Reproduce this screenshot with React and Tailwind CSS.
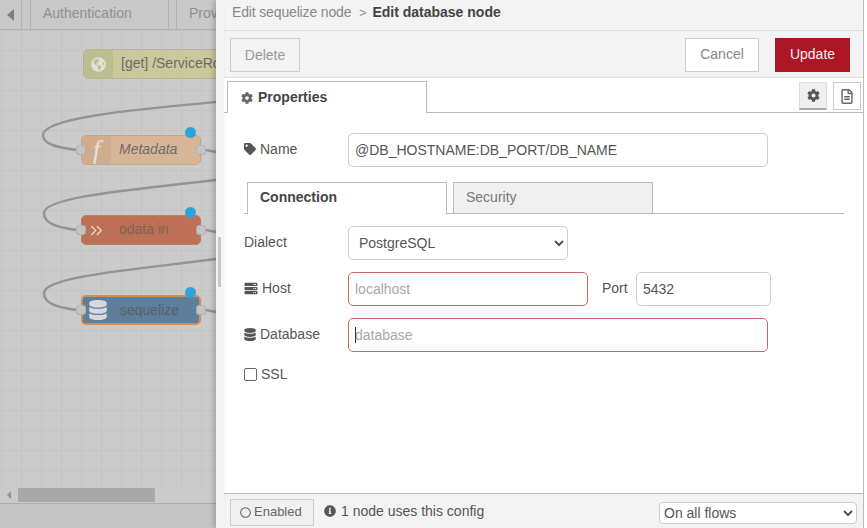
import { ChevronsRight } from 'lucide-react'
import {
  FaCog,
  FaDatabase,
  FaGlobeAmericas,
  FaInfoCircle,
  FaRegCircle,
  FaRegFileAlt,
  FaServer,
  FaTag,
} from 'react-icons/fa'

const font = "[font-family:'Liberation_Sans',Arial,sans-serif]"

const FlowNode = ({ top, left = 'left-[81px]', width = 'w-[120px]', label, icon, bg, iconBg, border, italic, ports = true, textColor = 'text-[#6b6b6b]' }) => (
  <div className={`absolute ${left} ${width} h-[30px]`} style={{ top }}>
    <div className={`flex h-full w-full rounded-[5px] overflow-hidden ${bg} ${border}`}>
      <div className={`flex items-center justify-center w-[29px] shrink-0 ${iconBg}`}>{icon}</div>
      <div className={`pl-[8px] leading-[27px] text-[14px] whitespace-nowrap ${textColor} ${italic ? 'italic' : ''}`}>{label}</div>
    </div>
    {ports && (
      <>
        <div className="absolute left-[-5px] top-[10px] w-[10px] h-[10px] rounded-[3px] bg-[#c4c4c4] border border-[#b0b0b0]" />
        <div className="absolute right-[-5px] top-[10px] w-[10px] h-[10px] rounded-[3px] bg-[#c4c4c4] border border-[#b0b0b0]" />
        <div className="absolute right-[5px] top-[-8px] w-[11px] h-[11px] rounded-full bg-[#2fa4d8]" />
      </>
    )}
  </div>
)

const Workspace = () => (
  <div className="flex flex-col w-[216px] h-full shrink-0 bg-[#c6c6c6]">
    {/* tab strip */}
    <div className="flex h-[30px] shrink-0 border-b border-[#b2b2b2] bg-[#c9c9c9] overflow-hidden">
      <div className="flex items-center justify-center w-[22px] shrink-0 border-r border-[#b2b2b2]">
        <div className="w-0 h-0 border-y-[6px] border-y-transparent border-r-[7px] border-r-[#808080]" />
      </div>
      <div className="w-[139px] ml-[8px] shrink-0 pl-[12px] leading-[27px] text-[14px] text-[#8f8f8f] border-x border-[#b2b2b2]">Authentication</div>
      <div className="ml-[7px] pl-[12px] flex-1 leading-[27px] text-[14px] text-[#8f8f8f] border-l border-[#b2b2b2]">Prov</div>
    </div>

    {/* canvas */}
    <div className="relative flex-1 overflow-hidden bg-[#cbcbcb] bg-[linear-gradient(to_right,#c4c4c4_1px,transparent_1px),linear-gradient(to_bottom,#c4c4c4_1px,transparent_1px)] bg-[size:20px_20px] bg-[position:1px_0px]">
      <svg className="absolute left-0 top-0" width="216" height="458" viewBox="0 30 216 458" fill="none" stroke="#939393" strokeWidth="2.5">
        <path d="M77 150C55 147 43 144 43 135C43 118 130 110 216 102" />
        <path d="M77 230C55 227 44 223 44 213C44 197 130 190 216 180" />
        <path d="M77 310C55 307 44 303 44 293C44 277 130 270 216 259" />
        <path d="M206 150L216 152M206 230L216 232M206 310L216 312" />
      </svg>
      <FlowNode
        top={19}
        left="left-[83px]"
        width="w-[200px]"
        label="[get] /ServiceRoot"
        bg="bg-[#c9c99c]"
        iconBg="bg-[#bdbd92]"
        border="border border-[#b3b397]"
        ports={false}
        icon={<FaGlobeAmericas className="w-[15px] h-[15px] text-[#e2e2d2]" />}
      />
      <FlowNode
        top={105}
        label="Metadata"
        italic
        bg="bg-[#d9b598]"
        iconBg="bg-[#cfab8f]"
        border="border border-[#bda892]"
        icon={<span className="[font-family:'Liberation_Serif',serif] italic text-[27px] leading-[28px] text-[#ebe0d6]">f</span>}
      />
      <FlowNode
        top={185}
        label="odata in"
        bg="bg-[#bd7055]"
        iconBg="bg-[#bd7055]"
        border="border border-[#b5806a]"
        textColor="text-[#7d6257]"
        icon={<ChevronsRight className="w-[19px] h-[19px] text-[#e6d4ca]" strokeWidth={1.75} />}
      />
      <FlowNode
        top={265}
        label="sequelize"
        bg="bg-[#5f7e9b]"
        iconBg="bg-[#5f7e9b]"
        border="border-2 border-[#cf9058]"
        textColor="text-[#54606c]"
        icon={<FaDatabase className="w-[18px] h-[20px] text-[#d9d9d9]" />}
      />
    </div>

    {/* scrollbar */}
    <div className="flex items-center h-[17px] shrink-0 border-b border-[#adadad] bg-[#cbcbcb]">
      <div className="ml-[7px] w-0 h-0 border-y-[4px] border-y-transparent border-r-[4px] border-r-[#8f8f8f]" />
      <div className="ml-[7px] w-[137px] h-[14px] bg-[#a9a9a9]" />
    </div>
    <div className="h-[24px] shrink-0" />
  </div>
)

const Separator = () => (
  <div className="relative z-10 w-[8px] h-full shrink-0 bg-[#f5f5f5] shadow-[-3px_0_5px_rgba(0,0,0,0.18)]">
    <div className="absolute left-[2px] top-[237px] w-[3px] h-[50px] bg-[#c8c8c8]" />
  </div>
)

const Label = ({ icon, children }) => (
  <label className="flex items-center gap-[4px] w-[104px] shrink-0 pb-[2px] text-[14px] text-[#555]">
    {icon}
    {children}
  </label>
)

const Input = ({ value, placeholder, invalid, className = '' }) => (
  <input
    readOnly
    value={value}
    placeholder={placeholder}
    className={`h-[34px] px-[6px] rounded-[5px] border bg-white text-[14px] text-[#555] placeholder:text-[#a8a8a8] outline-none ${invalid ? 'border-[#c66]' : 'border-[#ccc]'} ${className}`}
  />
)

const Editor = () => (
  <div className="flex flex-col w-[640px] h-full shrink-0 bg-white border-r border-[#bbb]">
    <div className="flex items-center h-[31px] shrink-0 pl-[8px] pb-[5px] gap-[6px] bg-[#f3f3f3] border-b border-[#ddd] text-[14px] text-[#888]">
      <span className="tracking-[-0.15px]">Edit sequelize node</span>
      <span className="ml-[2px] text-[12px]">&gt;</span>
      <span className="font-bold text-[#444]">Edit database node</span>
    </div>

    <div className="flex items-center justify-between h-[47px] shrink-0 px-[6px] pt-[1px] bg-[#f3f3f3] border-b border-[#ddd] text-[14px]">
      <button className="w-[70px] h-[34px] mt-[1px] bg-[#f3f3f3] border border-[#ccc] text-[#999]">Delete</button>
      <div className="flex gap-[16px] pr-[7px]">
        <button className="w-[74px] h-[34px] bg-white border border-[#ccc] text-[#888]">Cancel</button>
        <button className="w-[75px] h-[34px] bg-[#ad1625] text-[#eee]">Update</button>
      </div>
    </div>

    <div className="flex justify-between h-[35px] shrink-0 pl-[3px] border-b border-[#bbb]">
      <div className="flex items-center gap-[5px] w-[200px] h-[32px] mt-[3px] pl-[13px] bg-white border border-b-0 border-[#bbb] text-[14px] font-bold text-[#444]">
        <FaCog className="w-[12px] h-[12px] text-[#666]" />
        Properties
      </div>
      <div className="flex gap-[6px] pt-[4px] pr-[2px]">
        <div className="flex items-center justify-center w-[28px] h-[28px] bg-[#efefef] border border-[#ddd] border-b-2 border-b-[#aaa]">
          <FaCog className="w-[13px] h-[13px] text-[#555]" />
        </div>
        <div className="flex items-center justify-center w-[28px] h-[28px] bg-white border border-[#ccc]">
          <FaRegFileAlt className="w-[12px] h-[15px] text-[#666]" />
        </div>
      </div>
    </div>

    <div className="flex-1 pl-[20px] pt-[20px]">
      <div className="flex items-center">
        <Label icon={<FaTag className="w-[12px] h-[12px] text-[#555]" />}>Name</Label>
        <Input value="@DB_HOSTNAME:DB_PORT/DB_NAME" className="w-[420px]" />
      </div>

      <div className="flex w-[600px] h-[32px] mt-[15px] pl-[3px] gap-[6px] border-b border-[#bbb]">
        <div className="w-[200px] h-[32px] pl-[12px] leading-[29px] bg-white border border-b-0 border-[#bbb] text-[14px] font-bold text-[#444]">Connection</div>
        <div className="w-[200px] h-[31px] pl-[12px] leading-[29px] bg-[#f0f0f0] border border-b-0 border-[#bbb] text-[14px] text-[#777]">Security</div>
      </div>

      <div className="flex items-center mt-[12px]">
        <Label>Dialect</Label>
        <select className="w-[220px] h-[34px] px-[6px] rounded-[5px] border border-[#ccc] bg-white text-[14px] text-[#555]">
          <option>PostgreSQL</option>
        </select>
      </div>

      <div className="flex items-center mt-[12px]">
        <Label icon={<FaServer className="w-[14px] h-[13px] text-[#555]" />}>Host</Label>
        <Input value="" placeholder="localhost" invalid className="w-[240px]" />
        <span className="ml-[14px] w-[34px] pb-[2px] text-[14px] text-[#555]">Port</span>
        <Input value="5432" className="w-[135px]" />
      </div>

      <div className="flex items-center mt-[12px]">
        <Label icon={<FaDatabase className="w-[12px] h-[13px] text-[#555]" />}>Database</Label>
        <div className="relative">
          <Input value="" placeholder="database" invalid className="w-[420px]" />
          <div className="absolute left-[7px] top-[9px] w-px h-[16px] bg-[#333]" />
        </div>
      </div>

      <div className="flex items-center gap-[4px] mt-[12px] text-[14px] text-[#555]">
        <div className="w-[13px] h-[13px] rounded-[2px] border border-[#666] bg-white" />
        SSL
      </div>
    </div>

    <div className="flex items-center justify-between h-[35px] shrink-0 px-[6px] bg-[#f3f3f3] border-t border-[#bbb] text-[14px] text-[#555]">
      <div className="flex items-center gap-[10px] pt-[2px]">
        <div className="flex items-center gap-[3px] w-[84px] h-[27px] pl-[9px] bg-[#f0f0f0] border border-[#ccc] text-[13px] text-[#666]">
          <FaRegCircle className="w-[11px] h-[11px]" />
          Enabled
        </div>
        <div className="flex items-center gap-[5px] mb-[2px]">
          <FaInfoCircle className="w-[12px] h-[12px] text-[#555]" />
          1 node uses this config
        </div>
      </div>
      <select className="w-[198px] h-[22px] mt-[4px] rounded-[4px] border border-[#ccc] bg-white text-[14px] text-[#555]">
        <option>On all flows</option>
      </select>
    </div>
  </div>
)

const App = () => {
  return (
    <div className={`flex w-[867px] h-[528px] overflow-hidden bg-white ${font}`}>
      <Workspace />
      <Separator />
      <Editor />
    </div>
  )
}

export default App
